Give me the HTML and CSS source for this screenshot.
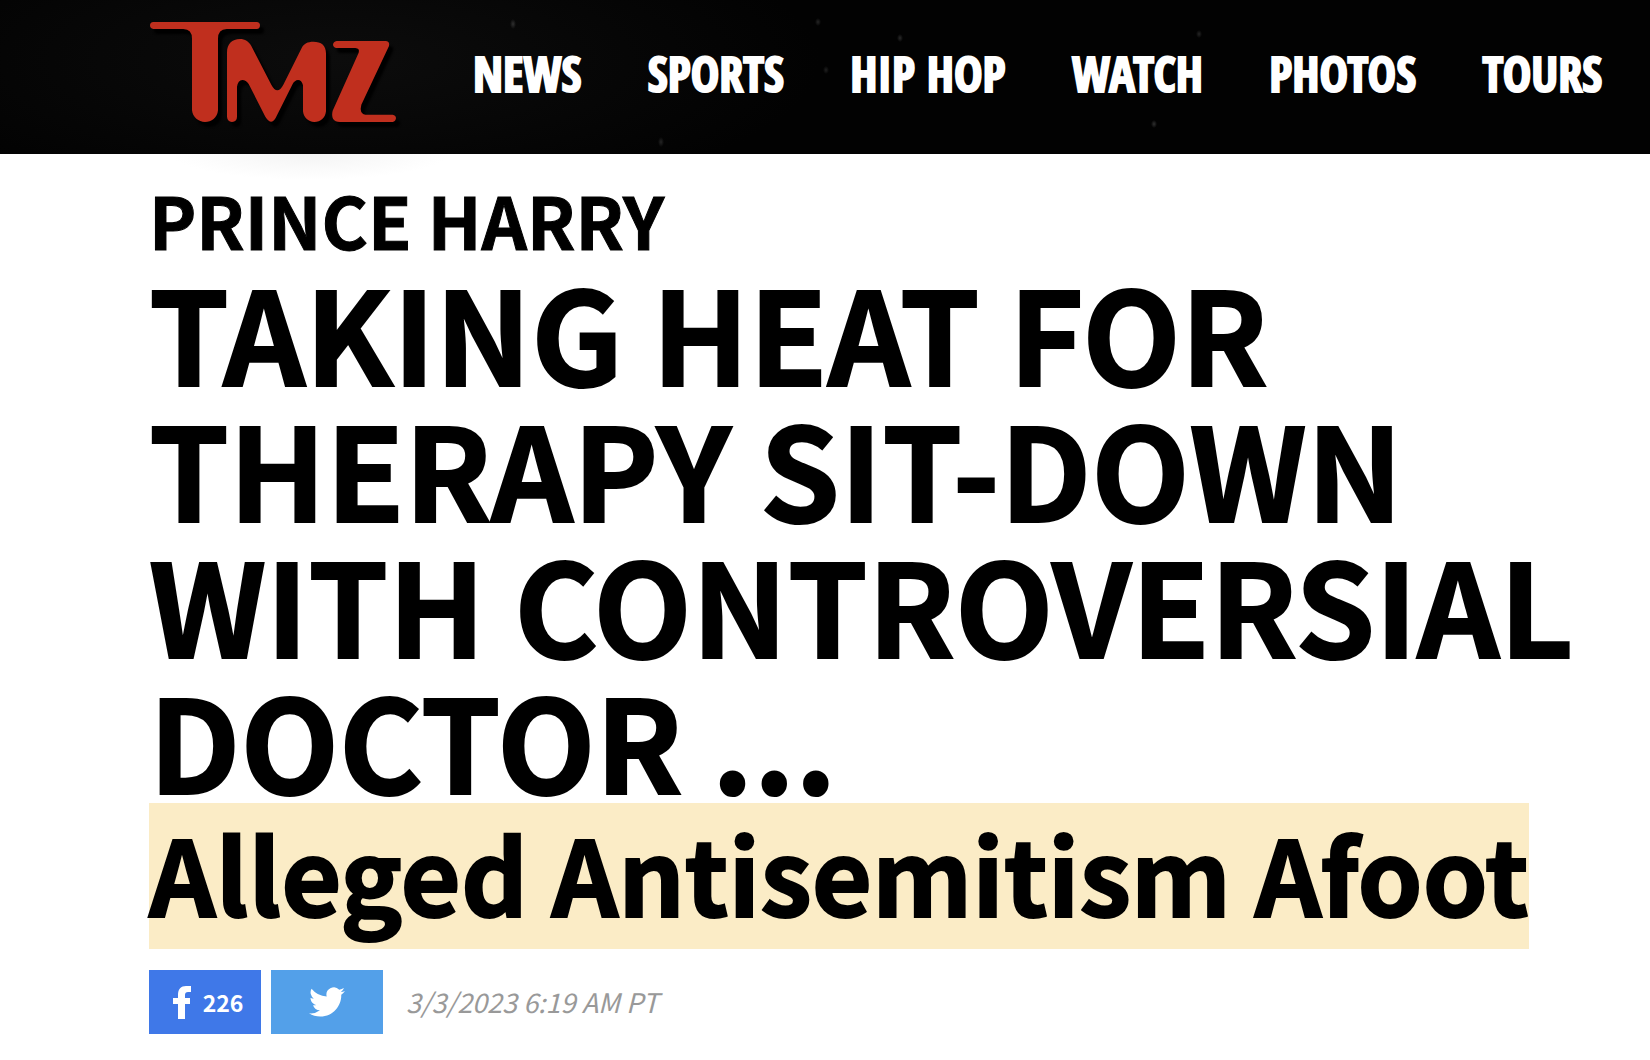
FILE: index.html
```html
<!DOCTYPE html>
<html lang="en">
<head>
<meta charset="utf-8">
<meta name="viewport" content="width=device-width, initial-scale=1">
<title>Prince Harry Taking Heat for Therapy Sit-Down</title>
<link rel="stylesheet" href="styles.css">
</head>
<body>
<header class="site-header">
  <a class="logo" href="#" aria-label="TMZ">
    <svg viewBox="60 66 741 300" width="247" height="100" fill="#c02f1e">
      <path d="M70 66H380Q390 67 390 76Q390 87 380 87H290Q264 88 264 116V331C262 354 244 366 225 366C206 366 188 352 186 331V116Q186 88 160 87H70Q60 86 60 76Q60 67 70 66Z"/>
      <path d="M291 350V158C291 132 306 117 330 117C345 117 356 124 364 138L424 254Q442 288 460 254L515 144C521 131 533 125 550 125C574 125 588 136 588 160V334C586 354 572 366 553 366C534 366 521 352 519 334V256Q515 240 504 240Q494 241 488 252L441 346Q426 382 406 350L356 252Q348 240 337 240Q324 241 321 260V350Q321 364 306 366Q292 364 291 350Z"/>
      <path d="M620 123H768Q780 125 777 138L694 314Q687 340 706 344H788Q798 346 798 355Q797 364 788 366H630Q600 364 608 332L686 158Q690 145 676 144H620Q610 143 609 134Q610 125 620 123Z"/>
    </svg>
  </a>
  <nav class="nav">
    <a href="#">NEWS</a>
    <a href="#">SPORTS</a>
    <a href="#">HIP HOP</a>
    <a href="#">WATCH</a>
    <a href="#">PHOTOS</a>
    <a href="#">TOURS</a>
  </nav>
</header>
<main class="article">
  <h1 class="title">
    <span class="kicker">PRINCE HARRY</span>
    <span class="headline">TAKING HEAT FOR THERAPY SIT-DOWN WITH CONTROVERSIAL DOCTOR ...</span>
    <mark class="subhead">Alleged Antisemitism Afoot</mark>
  </h1>
  <div class="meta">
    <button class="share facebook" type="button" aria-label="Share on Facebook, 226 shares">
      <svg viewBox="0 0 18 33" width="18" height="33" fill="#fff"><path d="M5 33V18H0V12H5V9C5 3 8 0 13 0H18V6H15Q12 6 12 9V12H17V18H12V33Z"/></svg>
      <span>226</span>
    </button>
    <button class="share twitter" type="button" aria-label="Share on Twitter">
      <svg viewBox="0 2 24 20" width="36" height="30" fill="#fff"><path d="M24 4.600a10 10 0 0 1-2.800.8 5 5 0 0 0 2.100-2.700 10 10 0 0 1-3.100 1.200 4.900 4.900 0 0 0-8.400 4.500A14 14 0 0 1 1.700 3.200a4.900 4.900 0 0 0 1.500 6.500 5 5 0 0 1-2.200-.6c0 2.300 1.600 4.400 3.900 4.900a5 5 0 0 1-2.200.1 4.900 4.900 0 0 0 4.600 3.400A9.900 9.900 0 0 1 0 19.500a14 14 0 0 0 7.500 2.200c9.100 0 14.300-7.700 14-14.600A10 10 0 0 0 24 4.600Z"/></svg>
    </button>
    <time class="date" datetime="2023-03-03T06:19">3/3/2023 6:19 AM PT</time>
  </div>
</main>
</body>
</html>
```
FILE: styles.css
```css
* {
  box-sizing: border-box;
}

body {
  margin: 0;
  background: #fff;
  color: #000;
  font-family: "Noto Sans CJK SC", sans-serif;
}

/* Dark, lightly scuffed bar */
.site-header {
  position: relative;
  display: flex;
  align-items: center;
  gap: 76px;
  min-height: 154px;
  padding: 0 48px 0 150px;
  background:
    radial-gradient(3px 5px at 513px 24px, #303030, transparent),
    radial-gradient(3px 4px at 818px 22px, #252525, transparent),
    radial-gradient(3px 4px at 900px 38px, #2a2a2a, transparent),
    radial-gradient(3px 4px at 1199px 34px, #252525, transparent),
    radial-gradient(3px 4px at 1154px 124px, #303030, transparent),
    radial-gradient(3px 4px at 826px 70px, #202020, transparent),
    radial-gradient(3px 5px at 661px 142px, #252525, transparent),
    radial-gradient(480px 150px at 340px 60px, #0c0c0c, transparent),
    #020202;
}

.site-header::after {
  content: "";
  position: absolute;
  top: 100%;
  left: 170px;
  width: 280px;
  height: 26px;
  background: radial-gradient(ellipse at top, #f4f4f4, transparent 70%);
}

.logo {
  flex: none;
  display: flex;
  padding-bottom: 10px;
}

.logo svg {
  filter: drop-shadow(4px 5px 1px #000);
}

.nav {
  display: flex;
  flex: 1;
  flex-wrap: wrap;
  justify-content: space-between;
  padding-bottom: 6px;
}

.nav a {
  color: #fff;
  font: 700 48px/56px "Open Sans Condensed", "Roboto Condensed", sans-serif;
  -webkit-text-stroke: 2px #fff;
  text-decoration: none;
}

.article {
  padding: 21px 60px 24px 149px;
}

.title {
  margin: 0;
  font-weight: 700;
}

.kicker,
.headline {
  display: block;
}

.kicker {
  font-size: 71px;
  line-height: 88px;
  -webkit-text-stroke: 1px #000;
}

.headline {
  font-size: 128px;
  line-height: 136px;
  -webkit-text-stroke: 2px #000;
}

.subhead {
  display: block;
  width: fit-content;
  margin-top: -4px;
  padding-bottom: 8px;
  background: #fbecc6;
  color: #000;
  font-size: 104px;
  line-height: 138px;
  -webkit-text-stroke: 2px #000;
}

.meta {
  display: flex;
  flex-wrap: wrap;
  align-items: center;
  gap: 10px;
  margin-top: 21px;
}

.share {
  display: flex;
  align-items: center;
  justify-content: center;
  gap: 12px;
  width: 112px;
  height: 64px;
  padding: 0;
  border: 0;
  color: #fff;
  font: 700 23px/32px "Noto Sans CJK SC", sans-serif;
}

.facebook {
  padding-left: 6px;
  background: #3f78e8;
}

.twitter {
  background: #53a0e9;
}

.date {
  margin-left: 13px;
  color: #999;
  font-size: 27px;
  font-style: italic;
  line-height: 40px;
}
```
